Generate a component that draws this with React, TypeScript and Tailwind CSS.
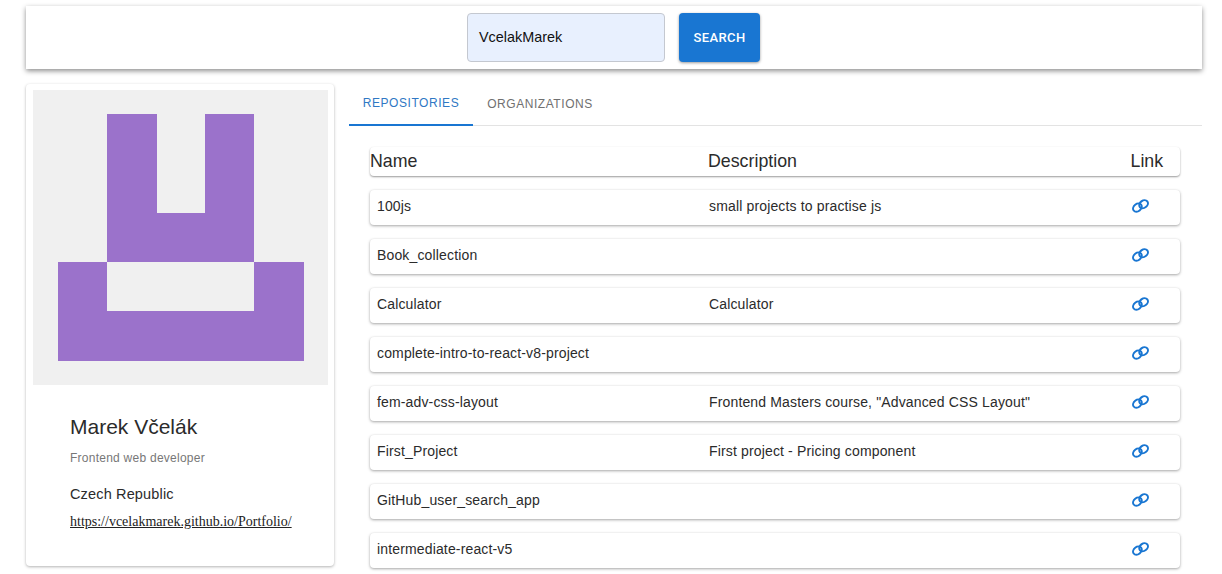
import React from 'react';

const repos = [
  { name: '100js', description: 'small projects to practise js' },
  { name: 'Book_collection', description: '' },
  { name: 'Calculator', description: 'Calculator' },
  { name: 'complete-intro-to-react-v8-project', description: '' },
  { name: 'fem-adv-css-layout', description: 'Frontend Masters course, "Advanced CSS Layout"' },
  { name: 'First_Project', description: 'First project - Pricing component' },
  { name: 'GitHub_user_search_app', description: '' },
  { name: 'intermediate-react-v5', description: '' },
];

const Identicon: React.FC = () => (
  <svg viewBox="0 0 295 295" className="block w-[295px] h-[295px]">
    <rect width="295" height="295" fill="#f0f0f0" />
    <path
      fill="#9b72cb"
      d="M74 24h50v99h48V24h49v148h50v99H25v-99h49zM74 172v49h147v-49z"
      fillRule="evenodd"
    />
  </svg>
);

const LinkIcon: React.FC = () => (
  <svg viewBox="0 0 17 14" className="block w-[17px] h-[14px]" fill="none" stroke="currentColor" strokeWidth="2">
    <ellipse cx="5.4" cy="8.6" rx="4.7" ry="3.6" transform="rotate(-38 5.4 8.6)" />
    <ellipse cx="11.6" cy="5.2" rx="4.7" ry="3.6" transform="rotate(-38 11.6 5.2)" />
  </svg>
);

const RepoRow: React.FC<{ name: string; description: string }> = ({ name, description }) => (
  <div className="flex items-center h-[35px] pb-[2px] shrink-0 rounded bg-white text-[14px] tracking-[0.15px] text-[#2b2b2b] shadow-[0_1px_3px_rgba(0,0,0,0.35),0_0_2px_rgba(0,0,0,0.04)]">
    <div className="w-[339px] pl-[7px]">{name}</div>
    <div className="flex-1">{description}</div>
    <div className="w-[81px] -mt-[1px] text-[#1976d2] pl-[33px]">
      <LinkIcon />
    </div>
  </div>
);

export default function App() {
  return (
    <div className="h-[574px] overflow-hidden bg-white pl-[26px] pr-[20px] pt-[6px] font-['Liberation_Sans',Arial,sans-serif] text-[#2b2b2b]">
      <header className="flex justify-center gap-[14px] h-[63px] pt-[7px] pr-[1px] bg-white shadow-[0_2px_5px_rgba(0,0,0,0.45)]">
        <div className="w-[198px] h-[49px] flex items-center pl-[11px] rounded bg-[#e8f0fe] border border-[#c4c8d0] text-[14.4px] text-[#111]">
          VcelakMarek
        </div>
        <button className="w-[81px] h-[49px] rounded bg-[#1976d2] text-white font-['Roboto',sans-serif] text-[13px] font-medium tracking-[0.4px] shadow-[0_1px_3px_rgba(0,0,0,0.4)]">
          SEARCH
        </button>
      </header>

      <div className="flex mt-[15px]">
        <aside className="w-[308px] h-[482px] shrink-0 rounded bg-white pt-[6px] px-[7px] shadow-[0_1px_3px_rgba(0,0,0,0.3)]">
          <Identicon />
          <div className="pl-[37px] pt-[30px]">
            <h2 className="text-[21px] leading-[24px] text-[#2b2b2b]">Marek Včelák</h2>
            <p className="mt-[12px] text-[12px] leading-[14px] tracking-[0.25px] text-[#777]">Frontend web developer</p>
            <p className="mt-[20px] text-[14.5px] leading-[18px] tracking-[0.15px]">Czech Republic</p>
            <a href="#" className="block mt-[10px] font-['Liberation_Serif',serif] text-[14px] leading-[18px] underline text-[#222]">
              https://vcelakmarek.github.io/Portfolio/
            </a>
          </div>
        </aside>

        <main className="flex-1 ml-[15px] min-w-0">
          <nav className="flex h-[42px] border-b border-[#e3e3e3] text-[12px] tracking-[0.55px]">
            <div className="w-[124px] h-[42px] pb-[2px] flex items-center justify-center border-b-2 border-[#1976d2] text-[#2f78c4]">REPOSITORIES</div>
            <div className="w-[134px] pb-[2px] flex items-center justify-center text-[#707070]">ORGANIZATIONS</div>
          </nav>
          <div className="flex flex-col gap-[14.1px] mt-[21px] ml-[21px] mr-[22px]">
            <div className="flex items-center h-[28.6px] rounded bg-white text-[17.8px] text-[#2b2b2b] shadow-[0_1px_2px_rgba(0,0,0,0.4)]">
              <div className="w-[338px]">Name</div>
              <div className="flex-1">Description</div>
              <div className="w-[49.5px]">Link</div>
            </div>
            {repos.map((repo) => (
              <RepoRow key={repo.name} name={repo.name} description={repo.description} />
            ))}
          </div>
        </main>
      </div>
    </div>
  );
}
